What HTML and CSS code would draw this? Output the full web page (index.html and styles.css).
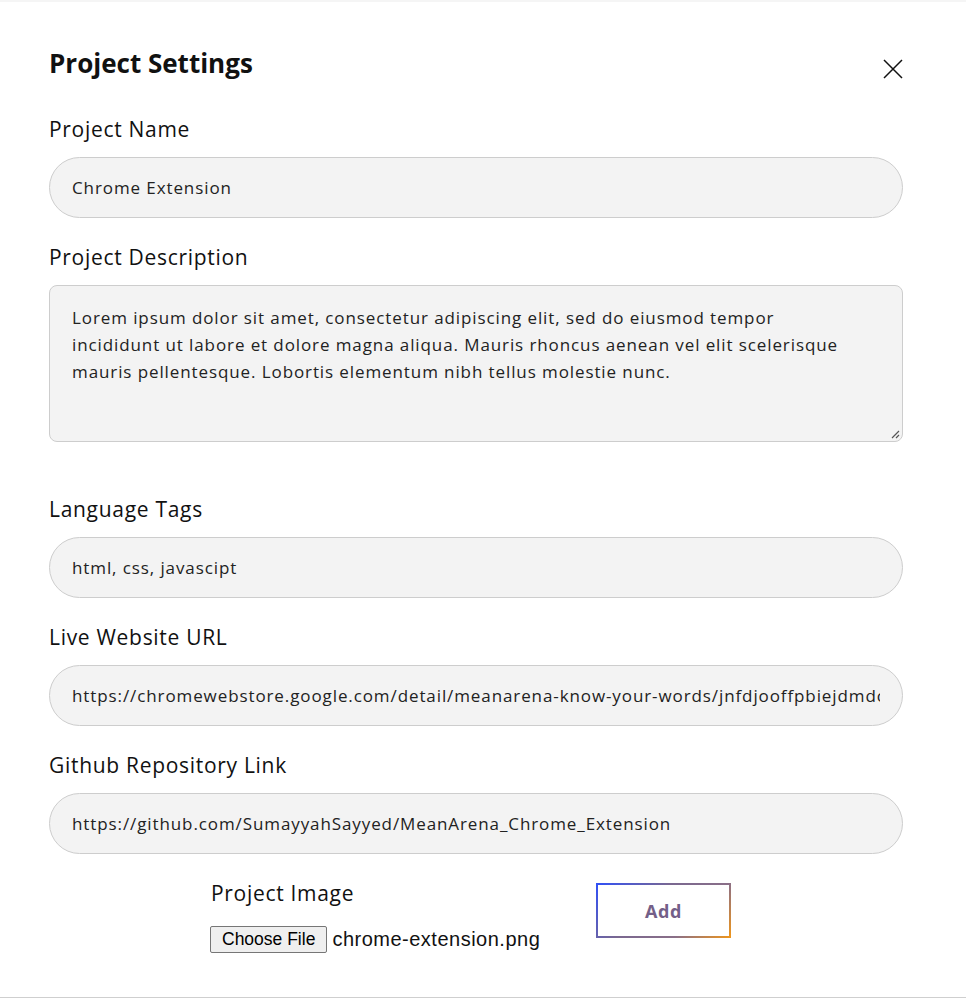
FILE: index.html
```html
<!DOCTYPE html>
<html lang="en">
<head>
<meta charset="utf-8">
<title>Project Settings</title>
<link rel="stylesheet" href="styles.css">
</head>
<body>
<div class="page">
  <div class="modal">
    <div class="modal-header">
      <h1 class="title">Project Settings</h1>
      <button class="close" aria-label="Close">
        <svg width="20" height="20" viewBox="0 0 20 20"><path d="M1 1 L19 19 M19 1 L1 19" stroke="#111" stroke-width="1.5" fill="none"/></svg>
      </button>
    </div>
    <label class="label first">Project Name</label>
    <div class="field"><span class="val">Chrome Extension</span></div>
    <label class="label">Project Description</label>
    <div class="area">
      <span class="line">Lorem ipsum dolor sit amet, consectetur adipiscing elit, sed do eiusmod tempor</span>
      <span class="line">incididunt ut labore et dolore magna aliqua. Mauris rhoncus aenean vel elit scelerisque</span>
      <span class="line">mauris pellentesque. Lobortis elementum nibh tellus molestie nunc.</span>
      <span class="grip"><svg width="10" height="10" viewBox="0 0 10 10"><path d="M9 2 L2 9 M9 6 L6 9" stroke="#555" stroke-width="1.2" fill="none"/></svg></span>
    </div>
    <label class="label spaced">Language Tags</label>
    <div class="field"><span class="val">html, css, javascipt</span></div>
    <label class="label">Live Website URL</label>
    <div class="field"><span class="val">https://chromewebstore.google.com/detail/meanarena-know-your-words/jnfdjooffpbiejdmdoelkelmnhfacfkb</span></div>
    <label class="label">Github Repository Link</label>
    <div class="field"><span class="val">https://github.com/SumayyahSayyed/MeanArena_Chrome_Extension</span></div>
    <div class="bottom-row">
      <div class="image-col">
        <label class="label img-label">Project Image</label>
        <div class="file-row">
          <span class="file-btn">Choose File</span>
          <span class="file-name">chrome-extension.png</span>
        </div>
      </div>
      <button class="add">Add</button>
    </div>
  </div>
</div>
</body>
</html>
```
FILE: styles.css
```css
* { box-sizing: border-box; }
html, body { margin: 0; padding: 0; background: #fff; }
body { font-family: "Open Sans", "Noto Sans", sans-serif; color: #111; }
.page { padding-top: 2px; background: #f5f5f5; }
.modal {
  background: #fff;
  padding: 42px 63px 0 49px;
  height: 996px;
  border-bottom: 1px solid #cfcfcf;
  display: flex;
  flex-direction: column;
}
.modal-header {
  display: flex;
  justify-content: space-between;
  align-items: flex-start;
  height: 39px;
}
.title {
  margin: 0;
  font-size: 26px;
  line-height: 39px;
  font-weight: 700;
}
.close {
  margin-top: 15px;
  padding: 0;
  border: 0;
  background: none;
  width: 20px;
  height: 20px;
}
.close svg { display: block; }
.label {
  display: block;
  font-size: 21px;
  line-height: 30px;
  letter-spacing: 0.7px;
  margin-top: 24px;
  margin-bottom: 13px;
  color: #111;
}
.label.first { margin-top: 31px; }
.label.spaced { margin-top: 52px; margin-bottom: 13px; }
.field {
  height: 61px;
  border: 1px solid #cdcdcd;
  border-radius: 31px;
  background: #f3f3f3;
  padding: 0 22px;
  display: flex;
  align-items: center;
  font-size: 17px;
  letter-spacing: 0.9px;
  color: #222;
}
.val {
  flex: 1;
  min-width: 0;
  white-space: nowrap;
  overflow: hidden;
}
.area {
  position: relative;
  height: 157px;
  border: 1px solid #cdcdcd;
  border-radius: 8px;
  background: #f3f3f3;
  padding: 18px 22px 0 22px;
  font-size: 17px;
  letter-spacing: 0.9px;
  line-height: 27px;
  color: #222;
}
.line { display: block; white-space: nowrap; }
.grip { position: absolute; right: 2px; bottom: 2px; line-height: 0; }
.bottom-row {
  display: flex;
  align-items: flex-start;
  gap: 58px;
  padding-left: 161px;
  margin-top: 24px;
}
.image-col { width: 328px; flex-shrink: 0; }
.img-label { margin-top: 0; margin-bottom: 18px; padding-left: 1px; }
.file-row { display: flex; align-items: center; gap: 5px; white-space: nowrap; }
.file-btn {
  flex-shrink: 0;
  font-family: "Liberation Sans", Arial, sans-serif;
  font-size: 17.5px;
  line-height: 19px;
  padding: 3px 11px 3px;
  background: #efefef;
  border: 1px solid #767676;
  border-radius: 2px;
  color: #000;
}
.file-name {
  flex-shrink: 0;
  font-family: "Liberation Sans", Arial, sans-serif;
  font-size: 20px;
  letter-spacing: 0.5px;
  color: #111;
}
.add {
  flex-shrink: 0;
  margin-top: 5px;
  width: 135px;
  height: 55px;
  border: 2px solid transparent;
  background: linear-gradient(#fff, #fff) padding-box,
              linear-gradient(135deg, #3050f8 0%, #7a6890 40%, #8a6f88 70%, #f0961a 100%) border-box;
  font-family: inherit;
  font-size: 18px;
  letter-spacing: 0.6px;
  font-weight: 700;
  color: #745f88;
  padding: 0;
}
```
